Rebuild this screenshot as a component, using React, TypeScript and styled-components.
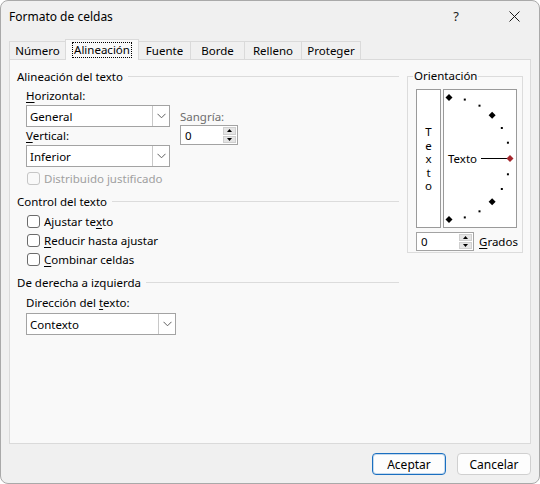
import React from 'react'
import styled, { createGlobalStyle } from 'styled-components'

const GlobalStyle = createGlobalStyle`
  html, body {
    margin: 0;
    padding: 0;
    background: #ffffff;
  }
  body {
    font-family: "Noto Sans", "Liberation Sans", sans-serif;
    font-size: 11.5px;
    color: #000;
  }
`

const Window = styled.div`
  width: 540px;
  height: 484px;
  box-sizing: border-box;
  border: 1px solid #a9a9a9;
  border-radius: 8px;
  background: #f0f0f0;
  display: flex;
  flex-direction: column;
  overflow: hidden;
`

// TITLE BAR

const TitleBar = styled.div`
  height: 30px;
  display: flex;
  align-items: center;
  padding-left: 8px;
  font-size: 12px;
`

const TitleText = styled.div`
  flex: 1;
`

const TitleIcon = styled.div<{ $gap?: number }>`
  display: flex;
  align-items: center;
  justify-content: center;
  margin-right: ${p => p.$gap ?? 0}px;
  font-size: 13px;
  color: #1a1a1a;
`

// TABS

const TabStrip = styled.div`
  height: 28px;
  display: flex;
  align-items: flex-end;
  padding-left: 9px;
`

const Tab = styled.div<{ $active?: boolean; $w: number }>`
  box-sizing: border-box;
  width: ${p => p.$w}px;
  height: ${p => (p.$active ? 21 : 18)}px;
  display: flex;
  align-items: center;
  justify-content: center;
  border: 1px solid #dadada;
  border-bottom: none;
  margin-left: -1px;
  background: ${p => (p.$active ? '#f9f9f9' : '#f0f0f0')};
  position: relative;
  z-index: ${p => (p.$active ? 2 : 1)};
  margin-bottom: ${p => (p.$active ? -1 : 0)}px;
  padding-bottom: ${p => (p.$active ? 1 : 0)}px;
`

const FocusText = styled.span`
  outline: 1px dotted #000;
  outline-offset: 0px;
  padding: 0 1px;
  line-height: 14px;
`

const Panel = styled.div`
  margin: 0 8px;
  height: 385px;
  box-sizing: border-box;
  border: 1px solid #dadada;
  background: #f9f9f9;
  display: flex;
  gap: 8px;
  padding: 8px 0 0 7px;
`

// LEFT COLUMN

const LeftColumn = styled.div`
  width: 382px;
  display: flex;
  flex-direction: column;
`

const SectionHeader = styled.div<{ $top?: number }>`
  height: 16px;
  display: flex;
  align-items: center;
  margin-top: ${p => p.$top ?? 0}px;
  white-space: nowrap;

  &::after {
    content: '';
    flex: 1;
    height: 1px;
    background: #dcdcdc;
    margin-left: 5px;
  }
`

const Indent = styled.div`
  padding-left: 9px;
  display: flex;
  flex-direction: column;
`

const FieldsRow = styled.div`
  display: flex;
  margin-top: 4px;
`

const FieldStack = styled.div`
  width: 144px;
  display: flex;
  flex-direction: column;
`

const SideStack = styled.div`
  margin-left: 10px;
  padding-top: 21px;
  display: flex;
  flex-direction: column;
`

const Label = styled.div<{ $dim?: boolean; $top?: number }>`
  height: 16px;
  line-height: 16px;
  margin-top: ${p => p.$top ?? 0}px;
  color: ${p => (p.$dim ? '#6d6d6d' : '#000')};
  white-space: nowrap;

  u {
    text-underline-offset: 2px;
  }
`

const SelectBox = styled.div<{ $w: number; $top?: number }>`
  box-sizing: border-box;
  width: ${p => p.$w}px;
  height: 22px;
  margin-top: ${p => p.$top ?? 0}px;
  border: 1px solid #a3a3a3;
  background: #fff;
  display: flex;
  align-items: stretch;
`

const SelectValue = styled.div`
  flex: 1;
  display: flex;
  align-items: center;
  padding-left: 3px;
`

const SelectArrow = styled.div`
  width: 16px;
  border-left: 1px solid #c8c8c8;
  display: flex;
  align-items: center;
  justify-content: center;
`

const SpinBox = styled.div<{ $h: number }>`
  box-sizing: border-box;
  width: 58px;
  height: ${p => p.$h}px;
  border: 1px solid #a3a3a3;
  background: #fff;
  display: flex;
  padding: 1px;
`

const SpinValue = styled.div`
  flex: 1;
  display: flex;
  align-items: center;
  padding-left: 3px;
`

const SpinButtons = styled.div`
  width: 13px;
  display: flex;
  flex-direction: column;
  gap: 1px;
`

const SpinHalf = styled.div`
  flex: 1;
  background: #e5e5e5;
  border: 1px solid #cfcfcf;
  display: flex;
  align-items: center;
  justify-content: center;
`

const CheckRow = styled.div<{ $dim?: boolean; $h?: number; $top?: number }>`
  height: ${p => p.$h ?? 19}px;
  margin-top: ${p => p.$top ?? 0}px;
  display: flex;
  align-items: center;
  color: ${p => (p.$dim ? '#a0a0a0' : '#000')};

  u {
    text-underline-offset: 2px;
  }
`

const CheckBox = styled.div<{ $dim?: boolean }>`
  box-sizing: border-box;
  width: 13px;
  height: 13px;
  margin-left: 1px;
  margin-right: 4px;
  border: 1px solid ${p => (p.$dim ? '#c6c6c6' : '#6b6b6b')};
  border-radius: 3px;
  background: ${p => (p.$dim ? '#f9f9f9' : '#fff')};
`

// ORIENTATION GROUP

const Group = styled.fieldset`
  margin: 0;
  width: 116px;
  height: 185px;
  box-sizing: border-box;
  border: 1px solid #dcdcdc;
  padding: 0 0 2px 5px;
`

const GroupLegend = styled.legend`
  padding: 0 1px;
  height: 16px;
  line-height: 16px;
`

const GroupBody = styled.div`
  margin-left: 3px;
  margin-top: 5px;
  display: flex;
  flex-direction: column;
`

const OrientRow = styled.div`
  display: flex;
  gap: 2px;
`

const VerticalBox = styled.div`
  box-sizing: border-box;
  width: 25px;
  height: 139px;
  border: 1px solid #9a9a9a;
  background: #fff;
  display: flex;
  flex-direction: column;
  align-items: center;
  justify-content: center;
  line-height: 13.5px;
  padding-top: 1px;
`

const ArcBox = styled.div`
  box-sizing: border-box;
  width: 74px;
  height: 139px;
  border: 1px solid #9a9a9a;
  background: #fff;
`

const DegreeRow = styled.div`
  display: flex;
  align-items: center;
  gap: 5px;
  margin-top: 4px;

  u {
    text-underline-offset: 2px;
  }
`

// FOOTER

const Footer = styled.div`
  display: flex;
  justify-content: flex-end;
  gap: 11px;
  padding: 9px 8px 0 0;
`

const Button = styled.div<{ $primary?: boolean }>`
  box-sizing: border-box;
  width: 74px;
  height: 22px;
  border-radius: 4px;
  border: 1px solid ${p => (p.$primary ? '#1a6fc0' : '#d0d0d0')};
  box-shadow: ${p => (p.$primary ? 'inset 0 0 0 1px rgba(26,111,192,0.25)' : 'none')};
  background: #fdfdfd;
  display: flex;
  align-items: center;
  justify-content: center;
  font-size: 12px;
`

const Chevron = () => (
  <svg width="9" height="6" viewBox="0 0 9 6">
    <path d="M0.5 0.8 L4.5 4.8 L8.5 0.8" fill="none" stroke="#606060" strokeWidth="1" />
  </svg>
)

const Select = ({ value, w, top }: { value: string; w: number; top?: number }) => (
  <SelectBox $w={w} $top={top}>
    <SelectValue>{value}</SelectValue>
    <SelectArrow>
      <Chevron />
    </SelectArrow>
  </SelectBox>
)

const Spinner = ({ h }: { h: number }) => (
  <SpinBox $h={h}>
    <SpinValue>0</SpinValue>
    <SpinButtons>
      <SpinHalf>
        <svg width="5" height="3" viewBox="0 0 5 3">
          <path d="M2.5 0 L5 3 L0 3 Z" fill="#000" />
        </svg>
      </SpinHalf>
      <SpinHalf>
        <svg width="5" height="3" viewBox="0 0 5 3">
          <path d="M0 0 L5 0 L2.5 3 Z" fill="#000" />
        </svg>
      </SpinHalf>
    </SpinButtons>
  </SpinBox>
)

const ArcDrawing = () => {
  const cx = 5
  const cy = 68.5
  const r = 61
  const marks = []
  for (let a = 90; a >= -90; a -= 15) {
    const rad = (a * Math.PI) / 180
    const x = cx + r * Math.cos(rad)
    const y = cy - r * Math.sin(rad)
    if (a % 45 === 0) {
      const s = 3.5
      marks.push(
        <path
          key={a}
          d={`M${x} ${y - s} L${x + s} ${y} L${x} ${y + s} L${x - s} ${y} Z`}
          fill={a === 0 ? '#a4262c' : '#000'}
        />
      )
    } else {
      marks.push(<rect key={a} x={x - 1} y={y - 1} width="2" height="2" fill="#000" />)
    }
  }
  return (
    <svg width="72" height="137" viewBox="0 0 72 137">
      <text x="4" y="73" fontFamily="Noto Sans, Liberation Sans, sans-serif" fontSize="11.5" fill="#000">
        Texto
      </text>
      <line x1="37" y1="68.5" x2="63" y2="68.5" stroke="#000" strokeWidth="1" />
      {marks}
    </svg>
  )
}

export default function App() {
  return (
    <>
      <GlobalStyle />
      <Window>
        <TitleBar>
          <TitleText>Formato de celdas</TitleText>
          <TitleIcon $gap={50}>?</TitleIcon>
          <TitleIcon $gap={19}>
            <svg width="11" height="11" viewBox="0 0 11 11">
              <path d="M0.5 0.5 L10.5 10.5 M10.5 0.5 L0.5 10.5" stroke="#1a1a1a" strokeWidth="1" />
            </svg>
          </TitleIcon>
        </TitleBar>

        <TabStrip>
          <Tab $w={57}>Número</Tab>
          <Tab $w={74} $active>
            <FocusText>Alineación</FocusText>
          </Tab>
          <Tab $w={53}>Fuente</Tab>
          <Tab $w={55}>Borde</Tab>
          <Tab $w={58}>Relleno</Tab>
          <Tab $w={60}>Proteger</Tab>
        </TabStrip>

        <Panel>
          <LeftColumn>
            <SectionHeader>Alineación del texto</SectionHeader>
            <Indent>
              <FieldsRow>
                <FieldStack>
                  <Label>
                    <u>H</u>orizontal:
                  </Label>
                  <Select value="General" w={144} top={1} />
                  <Label $top={1}>
                    <u>V</u>ertical:
                  </Label>
                  <Select value="Inferior" w={144} top={1} />
                </FieldStack>
                <SideStack>
                  <Label $dim>Sangría:</Label>
                  <Spinner h={20} />
                </SideStack>
              </FieldsRow>
              <CheckRow $dim $h={16} $top={3}>
                <CheckBox $dim />
                Distribuido justificado
              </CheckRow>
            </Indent>

            <SectionHeader $top={7}>Control del texto</SectionHeader>
            <Indent>
              <CheckRow $top={3}>
                <CheckBox />
                Ajustar te<u>x</u>to
              </CheckRow>
              <CheckRow>
                <CheckBox />
                <u>R</u>educir hasta ajustar
              </CheckRow>
              <CheckRow>
                <CheckBox />
                <u>C</u>ombinar celdas
              </CheckRow>
            </Indent>

            <SectionHeader $top={5}>De derecha a izquierda</SectionHeader>
            <Indent>
              <Label $top={5}>
                Dirección del <u>t</u>exto:
              </Label>
              <Select value="Contexto" w={150} top={2} />
            </Indent>
          </LeftColumn>

          <Group>
            <GroupLegend>Orientación</GroupLegend>
            <GroupBody>
              <OrientRow>
                <VerticalBox>
                  <span>T</span>
                  <span>e</span>
                  <span>x</span>
                  <span>t</span>
                  <span>o</span>
                </VerticalBox>
                <ArcBox>
                  <ArcDrawing />
                </ArcBox>
              </OrientRow>
              <DegreeRow>
                <Spinner h={19} />
                <span>
                  <u>G</u>rados
                </span>
              </DegreeRow>
            </GroupBody>
          </Group>
        </Panel>

        <Footer>
          <Button $primary>Aceptar</Button>
          <Button>Cancelar</Button>
        </Footer>
      </Window>
    </>
  )
}
